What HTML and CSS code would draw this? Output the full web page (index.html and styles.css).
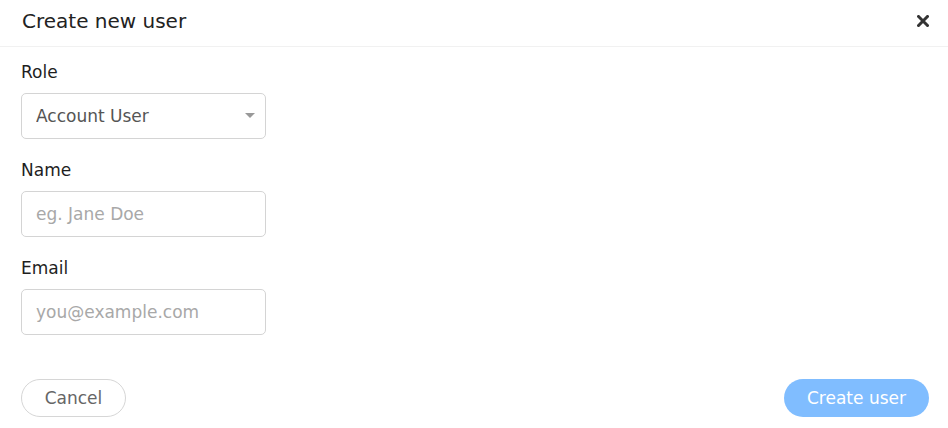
FILE: index.html
```html
<!DOCTYPE html>
<html lang="en">
<head>
  <meta charset="UTF-8">
  <title>Create new user</title>
  <link rel="stylesheet" href="styles.css">
</head>
<body>
  <div class="modal">

    <!-- header -->
    <div class="modal-header">
      <h2>Create new user</h2>
      <button class="close-btn" aria-label="Close">
        <svg width="12" height="12" viewBox="0 0 12 12">
          <path d="M1.5 1.5 L10.5 10.5 M10.5 1.5 L1.5 10.5" stroke="#333" stroke-width="3" stroke-linecap="square"/>
        </svg>
      </button>
    </div>

    <!-- form -->
    <div class="modal-body">
      <div class="field">
        <label for="roleSelect">Role</label>
        <div class="select-wrap">
          <select id="roleSelect">
            <option selected>Account User</option>
            <option>Account Admin</option>
          </select>
        </div>
      </div>
      <div class="field">
        <label for="nameInput">Name</label>
        <input id="nameInput" type="text" placeholder="eg. Jane Doe">
      </div>
      <div class="field">
        <label for="emailInput">Email</label>
        <input id="emailInput" type="email" placeholder="you@example.com">
      </div>
    </div>

    <!-- footer -->
    <div class="modal-footer">
      <button class="btn btn-cancel">Cancel</button>
      <button class="btn btn-primary" disabled>Create user</button>
    </div>

  </div>
</body>
</html>
```

FILE: styles.css
```css
/* base */
body {
  margin: 0;
  padding: 0;
  font-family: "DejaVu Sans", "Noto Sans", sans-serif;
  background: #fff;
  color: #222;
}
.modal {
  width: 948px;
  height: 428px;
  display: flex;
  flex-direction: column;
}

/* header */
.modal-header {
  height: 47px;
  box-sizing: border-box;
  border-bottom: 1px solid #f1f1f1;
  display: flex;
  align-items: center;
  justify-content: space-between;
  padding: 0 19px 0 22px;
}
.modal-header h2 {
  margin: 0;
  font-size: 20px;
  font-weight: normal;
  color: #222;
  margin-top: -4px;
}
.close-btn {
  border: none;
  background: none;
  padding: 0;
  width: 12px;
  height: 12px;
  margin-top: -4px;
  cursor: pointer;
  display: flex;
}

/* form */
.modal-body {
  padding: 14px 21px 0 21px;
}
.field {
  display: flex;
  flex-direction: column;
  margin-bottom: 20px;
}
.field label {
  font-size: 17px;
  line-height: 22px;
  margin-bottom: 10px;
  color: #1e1e1e;
}
.field input,
.field select {
  width: 245px;
  height: 46px;
  box-sizing: border-box;
  border: 1px solid #d4d4d4;
  border-radius: 5px;
  padding: 0 14px;
  font-family: inherit;
  font-size: 17px;
  color: #555;
  background: #fff;
  outline: none;
}
.field input::placeholder {
  color: #a8a8a8;
}
.select-wrap {
  position: relative;
  width: 245px;
}
.field select {
  -webkit-appearance: none;
  appearance: none;
}
.select-wrap::after {
  content: "";
  position: absolute;
  right: 11px;
  top: 20px;
  border-left: 5px solid transparent;
  border-right: 5px solid transparent;
  border-top: 5px solid #999;
  pointer-events: none;
}

/* footer */
.modal-footer {
  margin-top: auto;
  display: flex;
  justify-content: space-between;
  padding: 0 19px 11px 21px;
}
.btn {
  height: 38px;
  border-radius: 19px;
  font-family: inherit;
  font-size: 17px;
  cursor: pointer;
}
.btn-cancel {
  width: 105px;
  background: #fff;
  border: 1px solid #d6d6d6;
  color: #666;
}
.btn-primary {
  width: 145px;
  background: #80bdff;
  border: none;
  color: #fff;
}
```
